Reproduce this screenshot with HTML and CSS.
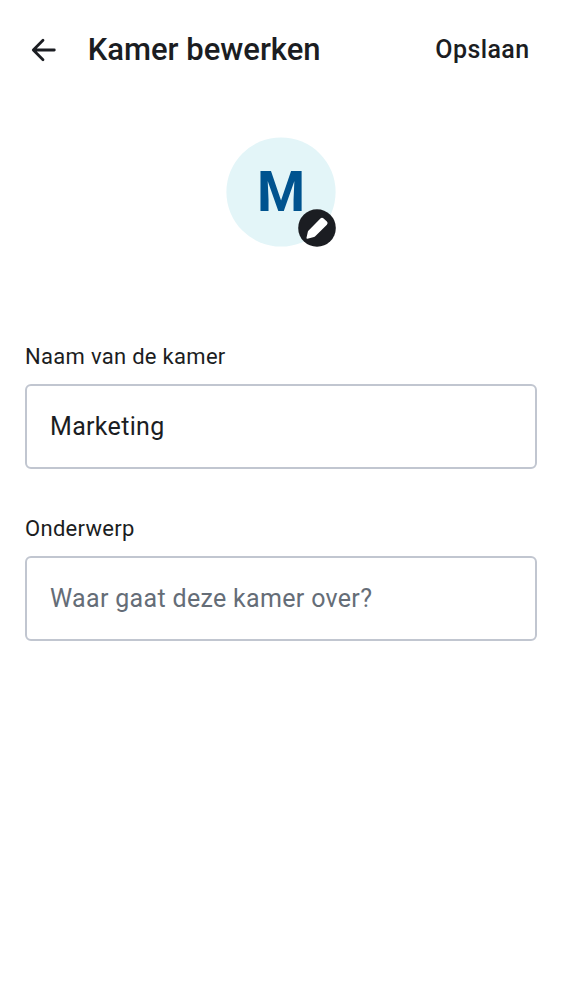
FILE: index.html
```html
<!DOCTYPE html>
<html lang="nl">
<head>
<meta charset="utf-8">
<title>Kamer bewerken</title>
<link rel="stylesheet" href="styles.css">
</head>
<body>
<header class="bar">
  <svg class="back" width="38" height="38" viewBox="0 0 38 38" fill="none" stroke="currentColor" stroke-width="2.8" stroke-linecap="round" stroke-linejoin="round"><path d="M30.3 19H9.7M19 9.3L9.3 19l9.7 9.7"/></svg>
  <h1 class="title">Kamer bewerken</h1>
  <button class="save" type="button">Opslaan</button>
</header>
<main class="content">
  <div class="avatar">
    <svg class="disc" width="110" height="110" viewBox="0 0 110 110"><circle cx="55" cy="55" r="54.6"/></svg>
    <span class="letter">M</span>
    <svg class="edit" width="38" height="38" viewBox="0 0 38 38"><circle cx="19" cy="19" r="18.8"/><path fill="#fff" d="M10.6 21.4L22.4 9.4Q24 7.9 25.6 9.4L28.9 12.6Q30.4 14.2 28.9 15.8L17 27.4Q16.6 27.8 16 28L9.4 29.7Q8.3 29.9 8.5 28.8L9.9 22.5Q10.1 21.9 10.6 21.4Z"/></svg>
  </div>
  <label class="label" for="name">Naam van de kamer</label>
  <input class="field" id="name" value="Marketing">
  <label class="label" for="topic">Onderwerp</label>
  <input class="field" id="topic" placeholder="Waar gaat deze kamer over?">
</main>
</body>
</html>
```
FILE: styles.css
```css
* { box-sizing: border-box; }
body { margin: 0; background: #fff; color: #1b1d22; font-family: Roboto, sans-serif; }
.bar { display: flex; align-items: center; height: 100px; padding: 0 32.5px 0 24px; }
.back { flex: none; }
.title { flex: 1; margin: 0 0 0 25.7px; font-size: 31px; line-height: 38px; font-weight: 500; white-space: nowrap; }
.save { padding: 0; border: 0; background: none; color: inherit; font: 500 25px/32px Roboto, sans-serif; letter-spacing: .4px; }
.content { display: flex; flex-direction: column; padding: 37px 25px 0; }
.avatar { position: relative; align-self: center; display: flex; align-items: center; justify-content: center; width: 110px; height: 110px; margin-bottom: 94.5px; color: #00538f; }
.disc { position: absolute; inset: 0; fill: #e3f5f8; }
.letter { position: relative; font-size: 55px; line-height: 64px; font-weight: 700; }
.edit { position: absolute; right: 0; bottom: 0; fill: #1b1d22; }
.label { font-size: 22px; line-height: 30px; margin-bottom: 12.5px; letter-spacing: .3px; }
.field { width: 100%; height: 85px; margin: 0 0 44.5px; padding: 0 23px; border: 2px solid #c1c6d0; border-radius: 6px; background: #fff; color: inherit; font: 400 25px/38px Roboto, sans-serif; letter-spacing: .32px; outline: 0; }
.field::placeholder { color: #656d77; opacity: 1; }
```
